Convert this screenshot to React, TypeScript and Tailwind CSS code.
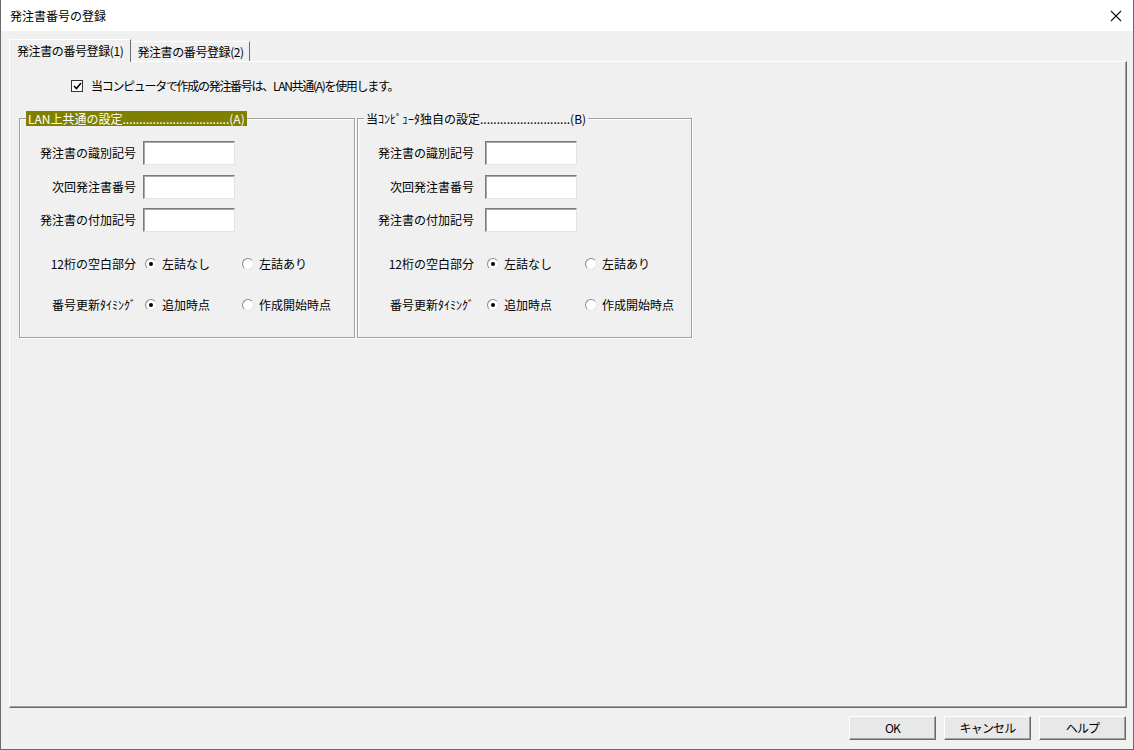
import React from 'react';

const font = { fontFamily: '"Noto Sans CJK JP", "Liberation Sans", sans-serif' };

const Field: React.FC<{ label: string; gap: string; mt?: string }> = ({ label, gap, mt = '' }) => (
  <div className={`flex items-center ${gap} ${mt}`}>
    <span className="w-[116px] text-right whitespace-nowrap">{label}</span>
    <div className="w-[92px] h-[24px] bg-white border border-t-[#7a7a7a] border-l-[#7a7a7a] border-b-[#e3e3e3] border-r-[#e3e3e3] shadow-[inset_1px_1px_0_#a8a8a8]" />
  </div>
);

const Radio: React.FC<{ checked?: boolean; label: string; w: string }> = ({ checked, label, w }) => (
  <div className={`flex items-center gap-[5px] ${w}`}>
    <span className="w-[12px] h-[12px] rounded-full bg-white border border-t-[#8a8a8a] border-l-[#8a8a8a] border-b-[#e6e6e6] border-r-[#e6e6e6] flex items-center justify-center shrink-0">
      {checked && <span className="w-[4px] h-[4px] rounded-full bg-black" />}
    </span>
    <span className="whitespace-nowrap">{label}</span>
  </div>
);

const RadioRow: React.FC<{ label: string; a: string; b: string; gap: string; w: string }> = ({ label, a, b, gap, w }) => (
  <div className="flex items-center">
    <span className={`w-[116px] text-right whitespace-nowrap ${gap}`}>{label}</span>
    <Radio checked label={a} w={w} />
    <Radio label={b} w="w-auto" />
  </div>
);

const Group: React.FC<{
  legend: string;
  active?: boolean;
  width: string;
  fieldGap: string;
  radioGap: string;
  optW: string;
}> = ({ legend, active, width, fieldGap, radioGap, optW }) => (
  <div className={`relative ${width} h-[220px] border border-[#a0a0a0] shadow-[inset_1px_1px_0_#ffffff,1px_1px_0_#ffffff]`}>
    <div
      className={`absolute -top-[8px] left-[6px] h-[15px] px-[2px] leading-[15px] whitespace-nowrap ${
        active ? 'bg-[#808000] text-white' : 'bg-[#f0f0f0] text-black'
      }`}
    >
      {legend}
    </div>
    <div className="flex flex-col pt-[22px]">
      <div className="flex flex-col">
        <Field label="発注書の識別記号" gap={fieldGap} />
        <Field label="次回発注書番号" gap={fieldGap} mt="mt-[10px]" />
        <Field label="発注書の付加記号" gap={fieldGap} mt="mt-[9px]" />
      </div>
      <div className="flex flex-col gap-[23px] mt-[23px]">
        <RadioRow label="12桁の空白部分" a="左詰なし" b="左詰あり" gap={radioGap} w={optW} />
        <RadioRow label="番号更新ﾀｲﾐﾝｸﾞ" a="追加時点" b="作成開始時点" gap={radioGap} w={optW} />
      </div>
    </div>
  </div>
);

const Button: React.FC<{ children: React.ReactNode }> = ({ children }) => (
  <button className="w-[87px] h-[24px] bg-[#e8e8e8] border border-t-white border-l-white border-b-[#6a6a6a] border-r-[#6a6a6a] shadow-[inset_-1px_-1px_0_#a0a0a0] flex items-center justify-center tracking-[-0.8px]">
    {children}
  </button>
);

export default function App() {
  return (
    <div className="w-[1134px] h-[750px] flex flex-col bg-[#f0f0f0] border-x border-b border-[#6a6a6a] text-[12px] text-black" style={font}>
      <div className="h-[31px] shrink-0 bg-white flex items-center justify-between pl-[9px] pr-[10px]">
        <span>発注書番号の登録</span>
        <svg width="12" height="12" viewBox="0 0 12 12" className="mr-[1px]">
          <path d="M1 1 L11 11 M11 1 L1 11" stroke="#111" strokeWidth="1.1" />
        </svg>
      </div>

      <div className="flex-1 flex flex-col pl-[8px] pr-[6px] pt-[8px]">
        <div className="flex items-end h-[22px] relative z-10 tracking-[-0.4px]">
          <div className="h-[23px] -mb-[1px] px-[7px] flex items-center bg-[#f0f0f0] border border-b-0 border-t-white border-l-white border-r-[#6a6a6a]">
            発注書の番号登録(1)
          </div>
          <div className="h-[20px] px-[5px] flex items-center border border-b-0 border-t-white border-l-[#f0f0f0] border-r-[#6a6a6a]">
            発注書の番号登録(2)
          </div>
        </div>

        <div className="h-[647px] flex flex-col border border-t-white border-l-white border-b-[#6a6a6a] border-r-[#6a6a6a] shadow-[inset_-1px_-1px_0_#a0a0a0]">
          <div className="flex items-center gap-[8px] ml-[61px] mt-[15px]">
            <span className="w-[12px] h-[12px] bg-white border border-[#333] flex items-center justify-center">
              <svg width="9" height="8" viewBox="0 0 9 8">
                <path d="M1 4 L3.5 6.5 L8 1" stroke="#000" strokeWidth="1.6" fill="none" />
              </svg>
            </span>
            <span className="tracking-[-1.3px]">当コンピュータで作成の発注番号は、LAN共通(A)を使用します。</span>
          </div>

          <div className="flex gap-[2px] ml-[9px] mt-[23px]">
            <Group
              legend="LAN上共通の設定................................(A)"
              active
              width="w-[336px]"
              fieldGap="gap-[7px]"
              radioGap="mr-[9px]"
              optW="w-[97px]"
            />
            <Group
              legend="当ｺﾝﾋﾟｭｰﾀ独自の設定...........................(B)"
              width="w-[335px]"
              fieldGap="gap-[11px]"
              radioGap="mr-[13px]"
              optW="w-[98px]"
            />
          </div>
        </div>

        <div className="flex justify-end gap-[8px] mt-[8px] mr-[1px]">
          <Button>OK</Button>
          <Button>キャンセル</Button>
          <Button>ヘルプ</Button>
        </div>
      </div>
    </div>
  );
}
